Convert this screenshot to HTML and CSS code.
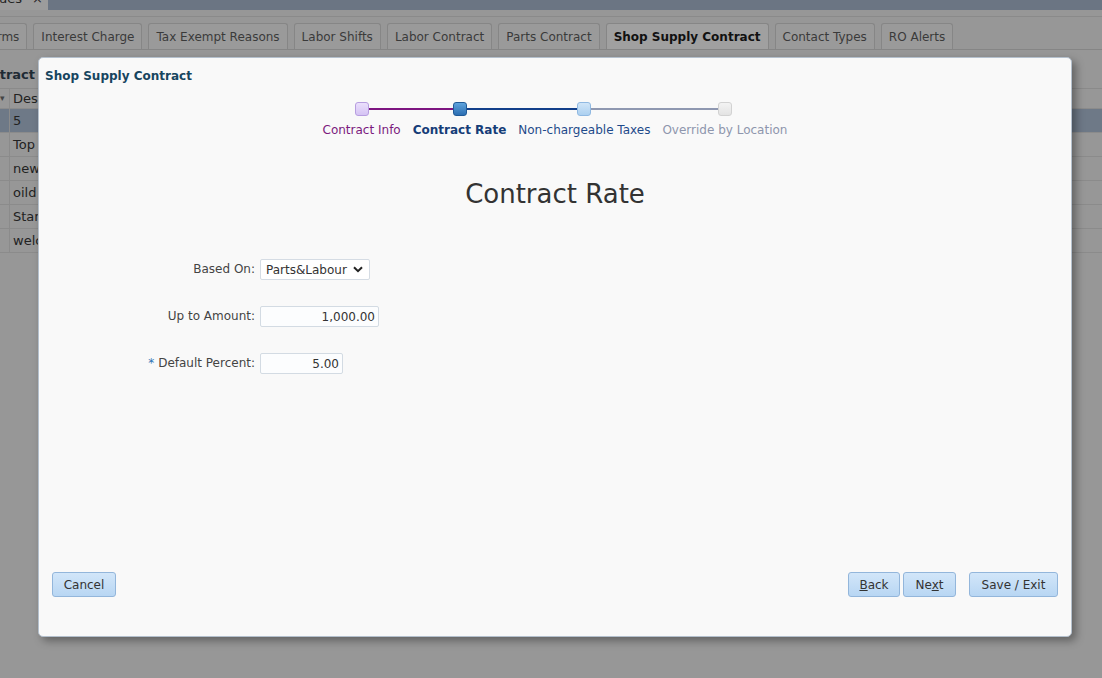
FILE: index.html
```html
<!DOCTYPE html>
<html lang="en">
<head>
<meta charset="utf-8">
<title>Shop Supply Contract</title>
<link rel="stylesheet" href="styles.css">
</head>
<body>
<div class="app">
  <div class="topbar">
    <div class="doc-tab"><span class="doc-tab-text">ues</span><span class="doc-tab-x">×</span></div>
  </div>
  <div class="tabarea">
    <div class="tabline">
      <div class="tab tab-first">Terms</div>
      <div class="tab">Interest Charge</div>
      <div class="tab">Tax Exempt Reasons</div>
      <div class="tab">Labor Shifts</div>
      <div class="tab">Labor Contract</div>
      <div class="tab">Parts Contract</div>
      <div class="tab active">Shop Supply Contract</div>
      <div class="tab">Contact Types</div>
      <div class="tab">RO Alerts</div>
    </div>
  </div>
  <div class="panel-head"><span class="panel-head-text">Contract</span></div>
  <div class="grid">
    <div class="grow ghead"><div class="c0">▾</div><div class="c1">Description</div></div>
    <div class="grow sel"><div class="c0"></div><div class="c1">5</div></div>
    <div class="grow"><div class="c0"></div><div class="c1">Top</div></div>
    <div class="grow"><div class="c0"></div><div class="c1">new</div></div>
    <div class="grow"><div class="c0"></div><div class="c1">oild</div></div>
    <div class="grow"><div class="c0"></div><div class="c1">Standard</div></div>
    <div class="grow"><div class="c0"></div><div class="c1">welcome</div></div>
  </div>
</div>

<div class="dialog">
  <div class="dlg-title">Shop Supply Contract</div>

  <div class="stepper">
    <div class="step s1">
      <div class="dotwrap"><div class="dot"></div></div>
      <div class="step-label">Contract Info</div>
    </div>
    <div class="step s2">
      <div class="dotwrap"><div class="dot"></div></div>
      <div class="step-label">Contract Rate</div>
    </div>
    <div class="step s3">
      <div class="dotwrap"><div class="dot"></div></div>
      <div class="step-label">Non-chargeable Taxes</div>
    </div>
    <div class="step s4">
      <div class="dotwrap"><div class="dot"></div></div>
      <div class="step-label">Override by Location</div>
    </div>
  </div>

  <h1 class="dlg-heading">Contract Rate</h1>

  <div class="form">
    <div class="field-label">Based On:</div>
    <div class="select"><span>Parts&amp;Labour</span>
      <svg class="chev" width="10" height="7" viewBox="0 0 10 7"><path d="M1 1.2 L5 5.2 L9 1.2" fill="none" stroke="#222" stroke-width="2"/></svg>
    </div>
    <div class="field-label">Up to Amount:</div>
    <div><input class="input w-amt" value="1,000.00" readonly></div>
    <div class="field-label"><span class="req">*</span>Default Percent:</div>
    <div><input class="input w-pct" value="5.00" readonly></div>
  </div>

  <div class="dlg-footer">
    <button class="btn w-cancel">Cancel</button>
    <div class="btn-group">
      <button class="btn w-back"><u>B</u>ack</button>
      <button class="btn w-next">Ne<u>x</u>t</button>
      <button class="btn w-save">Save / Exit</button>
    </div>
  </div>
</div>
</body>
</html>
```
FILE: styles.css
```css
* { box-sizing: border-box; }
html, body { margin: 0; }
body {
  width: 1102px;
  height: 678px;
  overflow: hidden;
  position: relative;
  font-family: "DejaVu Sans", Verdana, sans-serif;
  font-size: 12px;
  background: #979797;
}

/* ---------- dimmed background page ---------- */
.topbar {
  height: 10px;
  background: #6b7583;
  display: flex;
  overflow: hidden;
}
.doc-tab {
  width: 48px;
  height: 10px;
  background: #9c9c9c;
  overflow: hidden;
  display: flex;
  color: #222;
  font-size: 13px;
  line-height: 16px;
}
.doc-tab-text { margin-top: -9px; margin-left: -1px; }
.doc-tab-x { margin-top: -9px; margin-left: 10px; }

.tabarea {
  height: 40px;
  padding-top: 6px;
}
.tabline {
  height: 34px;
  border-top: 1px solid #8a8a8a;
  border-bottom: 1px solid #858585;
  display: flex;
  align-items: flex-end;
  gap: 6px;
  overflow: hidden;
}
.tab {
  flex: none;
  height: 26px;
  padding: 0 7px;
  border: 1px solid #868686;
  border-bottom: none;
  border-radius: 3px 3px 0 0;
  background: #9a9a9a;
  color: #3a3a3a;
  line-height: 26px;
  white-space: nowrap;
}
.tab-first { margin-left: -24px; }
.tab.active {
  background: #a0a0a0;
  color: #111;
  font-weight: bold;
}

.panel-head {
  height: 38px;
  padding-top: 17px;
  font-size: 13px;
  font-weight: bold;
  line-height: 16px;
  color: #1f2b34;
  white-space: nowrap;
  overflow: hidden;
}
.panel-head-text { display: inline-block; margin-left: -28px; }

.grid { border-top: 1px solid #8a8a8a; }
.grow {
  display: flex;
  height: 24px;
  border-bottom: 1px solid #8b8b8b;
  color: #222;
}
.grow.ghead { height: 20px; }
.grow.sel { background: #6e7987; }
.c0 {
  width: 10px;
  border-right: 1px solid #8b8b8b;
  font-size: 9px;
  color: #444;
  line-height: 18px;
  overflow: hidden;
}
.c1 {
  padding-left: 3px;
  line-height: 24px;
  font-size: 13px;
}
.ghead .c1 { line-height: 20px; }

/* ---------- dialog ---------- */
.dialog {
  position: absolute;
  left: 38px;
  top: 57px;
  width: 1034px;
  height: 580px;
  background: #f9f9f9;
  border: 1px solid #b4c0cd;
  border-radius: 5px;
  box-shadow: 4px 4px 8px rgba(0, 0, 0, 0.35);
  display: flex;
  flex-direction: column;
}
.dlg-title {
  padding: 10px 0 0 6px;
  font-weight: bold;
  font-size: 12px;
  line-height: 16px;
  color: #17455f;
}

/* stepper */
.stepper {
  display: flex;
  justify-content: center;
  gap: 12px;
  margin-top: 18px;
}
.step {
  display: flex;
  flex-direction: column;
  align-items: center;
}
.dotwrap {
  position: relative;
  width: 100%;
  height: 14px;
  display: flex;
  justify-content: center;
}
.dotwrap::before,
.dotwrap::after {
  content: "";
  position: absolute;
  top: 6px;
  height: 2px;
}
.dotwrap::before { left: -6px; right: 50%; }
.dotwrap::after { left: 50%; right: -6px; }
.s1 .dotwrap::before, .s4 .dotwrap::after { display: none; }
.s1 .dotwrap::after, .s2 .dotwrap::before { background: #7d1580; }
.s2 .dotwrap::after, .s3 .dotwrap::before { background: #123f8a; }
.s3 .dotwrap::after, .s4 .dotwrap::before { background: #8f98b1; }

.dot {
  position: relative;
  z-index: 1;
  width: 14px;
  height: 14px;
  border-radius: 3px;
  border: 1px solid;
}
.s1 .dot { background: linear-gradient(#ebe0fc, #d5c3f4); border-color: #b79ee0; }
.s2 .dot { background: linear-gradient(#5ea3dd, #2c6fb3); border-color: #1f5a98; }
.s3 .dot { background: linear-gradient(#d0e5f8, #acd0f0); border-color: #90b9e2; }
.s4 .dot { background: linear-gradient(#f3f3f3, #e3e3e3); border-color: #d2d2d2; }

.step-label {
  margin-top: 6px;
  line-height: 16px;
  white-space: nowrap;
}
.s1 .step-label { color: #7b1a7e; }
.s2 .step-label { color: #163d78; font-weight: bold; }
.s3 .step-label { color: #1e4a8a; }
.s4 .step-label { color: #8e96ad; }

.dlg-heading {
  margin: 39px 0 0;
  text-align: center;
  font-size: 26px;
  font-weight: normal;
  line-height: 34px;
  color: #333;
}

/* form */
.form {
  display: grid;
  grid-template-columns: 216px auto;
  column-gap: 5px;
  row-gap: 26px;
  margin-top: 48px;
  align-items: center;
  justify-content: start;
}
.field-label {
  text-align: right;
  color: #444;
  white-space: nowrap;
  line-height: 21px;
}
.req { color: #2f74b5; margin-right: 4px; }
.select {
  width: 110px;
  height: 21px;
  border: 1px solid #d5dce4;
  border-radius: 2px;
  background: #fff;
  display: flex;
  align-items: center;
  justify-content: space-between;
  padding: 0 6px 0 5px;
  color: #333;
}
.chev { display: block; }
.input {
  display: block;
  height: 21px;
  border: 1px solid #d3dbe3;
  border-radius: 2px;
  background: #fcfdfe;
  text-align: right;
  padding: 1px 3px 0;
  font: inherit;
  color: #333;
  outline: none;
}
.w-amt { width: 119px; }
.w-pct { width: 83px; }

/* footer */
.dlg-footer {
  margin-top: auto;
  display: flex;
  justify-content: space-between;
  align-items: center;
  padding: 0 13px 39px 13px;
}
.btn-group { display: flex; gap: 3px; }
.btn {
  height: 25px;
  padding: 0;
  border: 1px solid #93b6db;
  border-radius: 3px;
  background: linear-gradient(#d2e6f9, #b8d6f3);
  color: #333;
  font: inherit;
  line-height: 25px;
  text-align: center;
}
.w-cancel { width: 64px; }
.w-back { width: 52px; }
.w-next { width: 53px; }
.w-save { width: 89px; margin-left: 10px; }
```
